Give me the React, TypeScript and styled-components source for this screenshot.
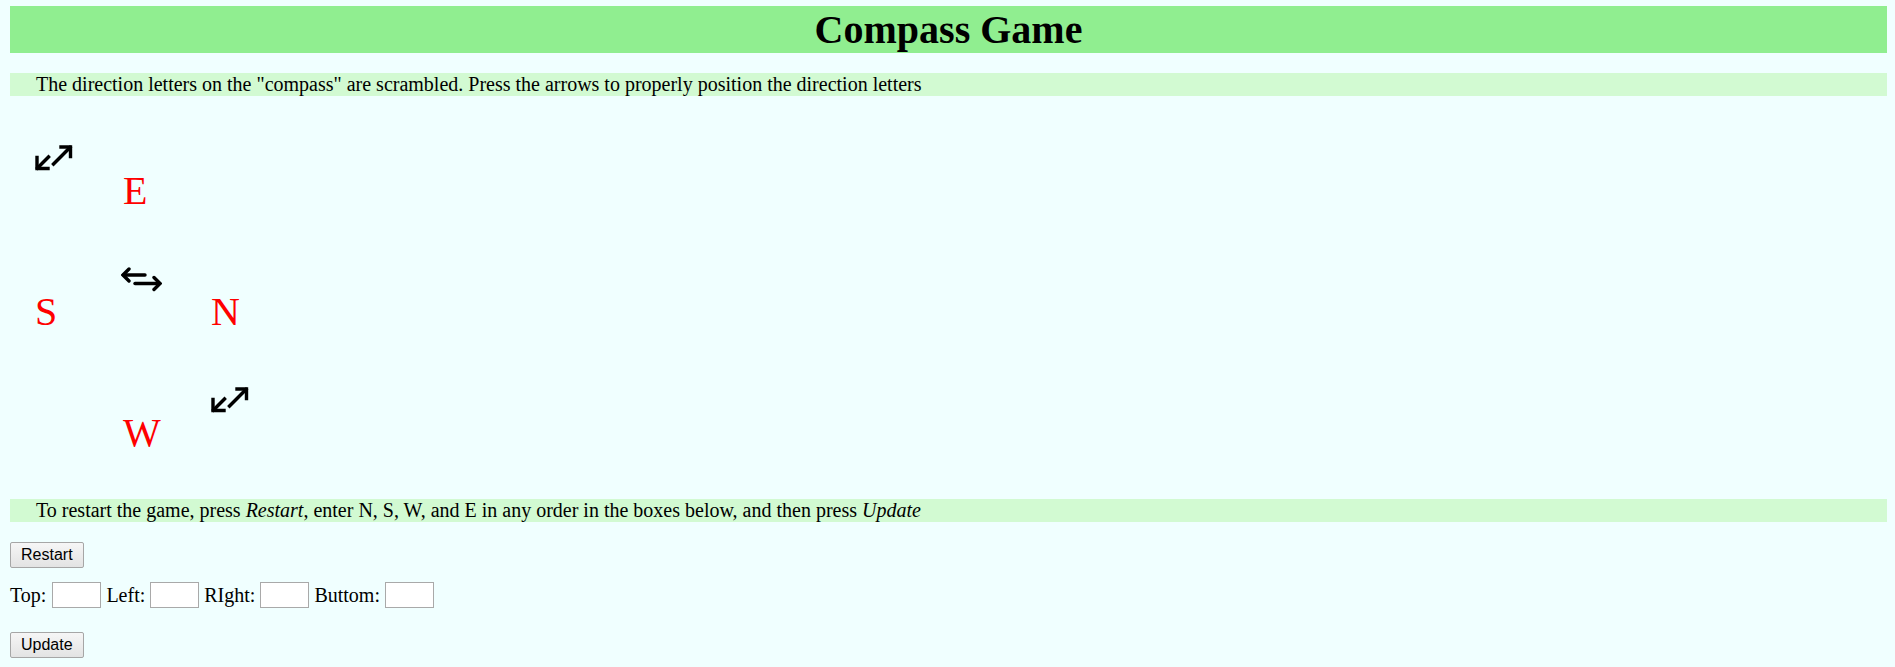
import React from "react";
import styled, { createGlobalStyle } from "styled-components";

const GlobalStyle = createGlobalStyle`
  html, body {
    margin: 0;
    padding: 0;
    background: #f0ffff;
  }
  body {
    font-family: "Liberation Serif", "Times New Roman", serif;
    font-size: 20px;
    color: #000;
  }
`;

const Page = styled.div`
  display: flex;
  flex-direction: column;
  align-items: stretch;
  padding: 6px 8px 8px 10px;
`;

const Title = styled.h1`
  margin: 0;
  background: #90ee90;
  font-size: 40px;
  font-weight: bold;
  line-height: 47px;
  text-align: center;
`;

const Note = styled.p<{ $gap?: number }>`
  margin: ${(p) => p.$gap ?? 0}px 0 0;
  padding-left: 26px;
  background: #d2fad2;
  font-size: 20px;
  line-height: 23px;
`;

const Board = styled.div`
  display: grid;
  grid-template-columns: repeat(3, 88px);
  grid-template-rows: 121px 121px 117px;
  margin: 44px 0 0 26px;
`;

const Cell = styled.div`
  display: flex;
  flex-direction: column;
  align-items: flex-start;
`;

const ArrowButton = styled.button<{ $top: number; $left?: number }>`
  margin: ${(p) => p.$top}px 0 0 ${(p) => p.$left ?? 0}px;
  padding: 0;
  border: 0;
  background: transparent;
  cursor: pointer;
  line-height: 0;
  display: block;
`;

const Letter = styled.span`
  margin: 31px 0 0 -1px;
  color: #ff0000;
  font-size: 40px;
  line-height: 40px;
`;

const Button = styled.button<{ $gap: number }>`
  align-self: flex-start;
  margin-top: ${(p) => p.$gap}px;
  padding: 3px 10px;
  font-family: "Liberation Sans", Arial, sans-serif;
  font-size: 16px;
  line-height: 18px;
  color: #000;
  background: linear-gradient(to bottom, #f6f6f6, #e3e3e3);
  border: 1px solid #a6a6a6;
  border-radius: 2px;
  cursor: pointer;
`;

const FieldRow = styled.div`
  display: flex;
  align-items: center;
  gap: 5px;
  margin-top: 14px;
  height: 26px;
`;

const Caption = styled.label`
  font-size: 20px;
  line-height: 23px;
  &:first-child {
    margin-right: 1px;
  }
`;

const Box = styled.input`
  box-sizing: border-box;
  width: 49px;
  height: 26px;
  margin: 0;
  padding: 1px 2px;
  border: 1px solid #a9a9a9;
  background: #fff;
  font-family: "Liberation Sans", Arial, sans-serif;
  font-size: 16px;
`;

const DiagonalArrows = () => (
  <svg width="38" height="26" viewBox="0 0 38 26" fill="none" stroke="#000" strokeWidth="3.4" strokeLinecap="square" strokeLinejoin="miter">
    <path d="M2 12.5 V23.5 H13" />
    <path d="M2.5 23 L13.5 12" />
    <path d="M26 2 H35.5 V11.5" />
    <path d="M35 2.5 L18.5 19" />
  </svg>
);

const SwapArrows = () => (
  <svg width="41" height="26" viewBox="0 0 41 26" fill="none" stroke="#000" strokeWidth="3.4" strokeLinecap="round" strokeLinejoin="miter">
    <path d="M8 2 L2 8 L8 14" />
    <path d="M2.5 8 H24" />
    <path d="M33 10.5 L39 16.5 L33 22.5" />
    <path d="M14 16.5 H38.5" />
  </svg>
);

export default function App() {
  return (
    <>
      <GlobalStyle />
      <Page>
        <Title>Compass Game</Title>
        <Note $gap={20}>
          The direction letters on the "compass" are scrambled. Press the arrows to properly position the direction letters
        </Note>
        <Board>
          <Cell>
            <ArrowButton $top={5} $left={-1} aria-label="swap top and bottom">
              <DiagonalArrows />
            </ArrowButton>
          </Cell>
          <Cell>
            <Letter>E</Letter>
          </Cell>
          <Cell />
          <Cell>
            <Letter>S</Letter>
          </Cell>
          <Cell>
            <ArrowButton $top={6} $left={-3} aria-label="swap left and right">
              <SwapArrows />
            </ArrowButton>
          </Cell>
          <Cell>
            <Letter>N</Letter>
          </Cell>
          <Cell />
          <Cell>
            <Letter>W</Letter>
          </Cell>
          <Cell>
            <ArrowButton $top={5} $left={-1} aria-label="swap diagonal">
              <DiagonalArrows />
            </ArrowButton>
          </Cell>
        </Board>
        <Note>
          To restart the game, press <i>Restart</i>, enter N, S, W, and E in any order in the boxes below, and then press <i>Update</i>
        </Note>
        <Button $gap={20}>Restart</Button>
        <FieldRow>
          <Caption htmlFor="top">Top:</Caption>
          <Box id="top" type="text" />
          <Caption htmlFor="left">Left:</Caption>
          <Box id="left" type="text" />
          <Caption htmlFor="right">RIght:</Caption>
          <Box id="right" type="text" />
          <Caption htmlFor="bottom">Buttom:</Caption>
          <Box id="bottom" type="text" />
        </FieldRow>
        <Button $gap={24}>Update</Button>
      </Page>
    </>
  );
}
